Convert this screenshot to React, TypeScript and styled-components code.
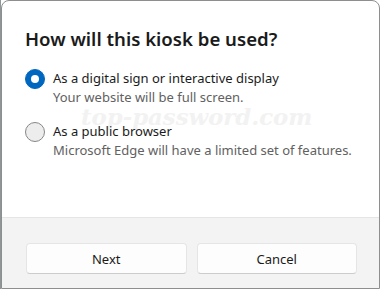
import React from "react";
import styled, { createGlobalStyle } from "styled-components";

const GlobalStyle = createGlobalStyle`
  html, body {
    margin: 0;
    padding: 0;
    background: #ffffff;
  }
  body {
    font-family: "Noto Sans", "Liberation Sans", Arial, sans-serif;
    color: #1b1b1b;
  }
`;

const Page = styled.div`
  width: 381px;
  height: 289px;
  padding-left: 1px;
  box-sizing: border-box;
  background: linear-gradient(#8f9598, #8f9598) left top / 1px 100% no-repeat,
    #ffffff;
  overflow: hidden;
`;

const Dialog = styled.div`
  position: relative;
  width: 379px;
  height: 289px;
  box-sizing: border-box;
  border: 1px solid #8e8e8e;
  border-radius: 8px 8px 0 0;
  background: #ffffff;
  display: flex;
  flex-direction: column;
  overflow: hidden;
`;

const Content = styled.div`
  position: relative;
  z-index: 1;
  height: 216px;
  box-sizing: border-box;
  padding: 24px 23px 0 23px;
`;

const Title = styled.h1`
  margin: 0 0 16px 0;
  font-size: 18.6px;
  line-height: 28px;
  font-weight: 600;
  color: #1b1b1b;
`;

const OptionList = styled.div`
  display: flex;
  flex-direction: column;
  gap: 15px;
`;

const Option = styled.label`
  display: flex;
  align-items: flex-start;
  gap: 8px;
`;

const Radio = styled.span<{ $checked?: boolean }>`
  flex: none;
  width: 20px;
  height: 20px;
  box-sizing: border-box;
  border-radius: 50%;
  display: flex;
  align-items: center;
  justify-content: center;
  background: ${(p) => (p.$checked ? "#0067c0" : "#ededed")};
  border: 1px solid ${(p) => (p.$checked ? "#0067c0" : "#878787")};
  &::after {
    content: "";
    display: ${(p) => (p.$checked ? "block" : "none")};
    width: 8px;
    height: 8px;
    border-radius: 50%;
    background: #ffffff;
  }
`;

const OptionText = styled.div`
  display: flex;
  flex-direction: column;
`;

const OptionLabel = styled.span`
  font-size: 13px;
  line-height: 19px;
  color: #1b1b1b;
`;

const OptionHint = styled.span`
  font-size: 13px;
  line-height: 19px;
  color: #616161;
`;

// faint site watermark laid over the dialog body
const Watermark = styled.div`
  position: absolute;
  left: 79px;
  top: 100px;
  z-index: 0;
  font-family: "DejaVu Serif", "Liberation Serif", serif;
  font-style: italic;
  font-weight: 700;
  font-size: 22.8px;
  line-height: 32px;
  color: #f2f2f2;
  pointer-events: none;
  white-space: nowrap;
`;

const Footer = styled.div`
  flex: 1;
  display: grid;
  grid-template-columns: 1fr 1fr;
  align-content: start;
  gap: 10px;
  padding: 25px 22px 0 24px;
  background: #f3f3f3;
  border-top: 1px solid #e5e5e5;
`;

const Button = styled.button`
  height: 31px;
  box-sizing: border-box;
  border: 1px solid #e5e5e5;
  border-bottom-color: #cccccc;
  border-radius: 4px;
  background: #fdfdfd;
  font-family: "Noto Sans", "Liberation Sans", Arial, sans-serif;
  font-size: 13px;
  color: #1b1b1b;
  cursor: pointer;
`;

export default function App() {
  return (
    <>
      <GlobalStyle />
      <Page>
        <Dialog>
          <Watermark>top-password.com</Watermark>
          <Content>
            <Title>How will this kiosk be used?</Title>
            <OptionList>
              <Option>
                <Radio $checked />
                <OptionText>
                  <OptionLabel>As a digital sign or interactive display</OptionLabel>
                  <OptionHint>Your website will be full screen.</OptionHint>
                </OptionText>
              </Option>
              <Option>
                <Radio />
                <OptionText>
                  <OptionLabel>As a public browser</OptionLabel>
                  <OptionHint>Microsoft Edge will have a limited set of features.</OptionHint>
                </OptionText>
              </Option>
            </OptionList>
          </Content>
          <Footer>
            <Button>Next</Button>
            <Button>Cancel</Button>
          </Footer>
        </Dialog>
      </Page>
    </>
  );
}
